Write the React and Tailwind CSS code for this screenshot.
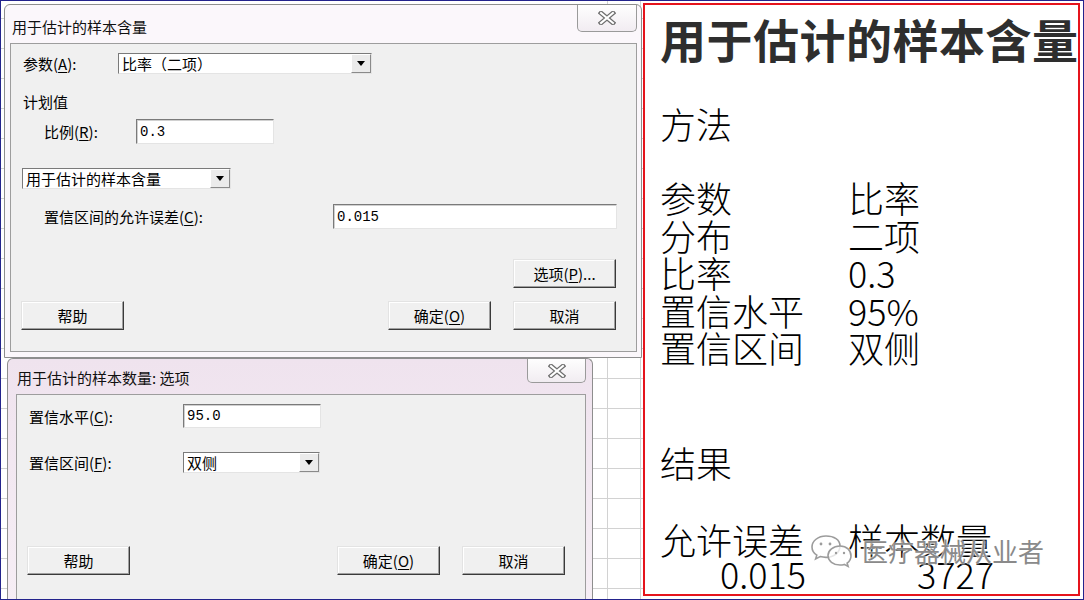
import React from 'react'

const cjk = "font-['Noto_Sans_CJK_SC','Noto_Sans',sans-serif]"

function Key({ children }) {
  return <span className="underline underline-offset-[2px] decoration-1">{children}</span>
}

function Btn({ children, className = '' }) {
  return (
    <div className={`h-[29px] flex items-center justify-center bg-[#f0f0f0] border border-t-[#e3e3e3] border-l-[#e3e3e3] border-r-[#3a3a3a] border-b-[#3a3a3a] shadow-[inset_-1px_-1px_0_#a0a0a0,inset_1px_1px_0_#ffffff] text-[15px] leading-none text-black ${className}`}>
      {children}
    </div>
  )
}

function Field({ value, className = '' }) {
  return (
    <div className={`bg-white border border-t-[#7a7a7a] border-l-[#7a7a7a] border-r-[#e4e4e4] border-b-[#e4e4e4] shadow-[inset_1px_1px_0_#d0d0d0] flex items-center pl-[3px] text-[14px] leading-none text-black font-['Liberation_Mono',monospace] ${className}`}>
      {value}
    </div>
  )
}

function Drop({ value, className = '' }) {
  return (
    <div className={`h-[21px] bg-white border border-t-[#7a7a7a] border-l-[#7a7a7a] border-r-[#e4e4e4] border-b-[#e4e4e4] flex items-center ${className}`}>
      <span className="flex-1 pl-[3px] text-[15px] leading-none text-black whitespace-nowrap">{value}</span>
      <span className="w-[20px] h-[19px] bg-[#ebebeb] border border-t-[#ffffff] border-l-[#ffffff] border-r-[#8a8a8a] border-b-[#8a8a8a] flex items-center justify-center">
        <svg width="8" height="5" viewBox="0 0 8 5">
          <path d="M0 0H8L4 5Z" fill="#000" />
        </svg>
      </span>
    </div>
  )
}

function CloseBtn({ className = '' }) {
  return (
    <div className={`rounded-b-[5px] border border-t-0 border-[#9a9a9a] bg-gradient-to-b from-[#fefefe] to-[#f1ecf1] flex items-center justify-center ${className}`}>
      <svg width="18" height="14" viewBox="0 0 18 14">
        <path d="M3 2L15 12M15 2L3 12" stroke="#6e6e6e" strokeWidth="4.5" strokeLinecap="square" />
        <path d="M3 2L15 12M15 2L3 12" stroke="#ffffff" strokeWidth="2" strokeLinecap="square" />
      </svg>
    </div>
  )
}

function WeChatIcon() {
  return (
    <svg width="44" height="34" viewBox="0 0 44 34" fill="none">
      <path d="M16 2C8 2 2 7 2 13c0 3.4 1.9 6.3 4.8 8.2L5.6 25l4.6-2.4c1.8.5 3.7.8 5.8.8 8 0 14-5 14-11.4S24 2 16 2Z" fill="#ffffff" fillOpacity="0.7" stroke="#9c9c9c" strokeWidth="1.6" />
      <path d="M30 12c-6.8 0-12 4.3-12 9.6S23.2 31 30 31c1.5 0 2.9-.2 4.2-.6l3.9 2-1-3.3c2.4-1.8 3.9-4.3 3.9-7.2C41 16.3 36.8 12 30 12Z" fill="#ffffff" fillOpacity="0.75" stroke="#9c9c9c" strokeWidth="1.6" />
      <circle cx="11" cy="10" r="1.4" fill="#9c9c9c" />
      <circle cx="20" cy="10" r="1.4" fill="#9c9c9c" />
      <circle cx="26" cy="19" r="1.2" fill="#9c9c9c" />
      <circle cx="34" cy="19" r="1.2" fill="#9c9c9c" />
    </svg>
  )
}

function SampleDialog() {
  return (
    <div className="ml-[3px] mt-[3px] w-[638px] h-[354px] shrink-0 flex flex-col border border-[#8e8e8e] rounded-t-[6px] bg-[#fbf7fb] pl-[5px] pr-[4px] pb-[5px]">
      <div className="h-[38px] shrink-0 flex items-start justify-between">
        <span className="pl-[2px] pt-[14px] text-[15px] leading-none text-[#111]">用于估计的样本含量</span>
        <CloseBtn className="w-[60px] h-[27px]" />
      </div>
      <div className="flex-1 bg-[#f0f0f0] border border-[#9d9d9d] flex flex-col text-[15px] text-black">
        {/* 参数 */}
        <div className="mt-[9px] h-[21px] pl-[12px] flex items-center">
          <span className="w-[95px] leading-none">参数(<Key>A</Key>):</span>
          <Drop value="比率（二项）" className="w-[254px]" />
        </div>

        {/* 计划值 */}
        <div className="mt-[17px] h-[20px] pl-[12px] flex items-center leading-none">计划值</div>

        <div className="mt-[8px] h-[25px] pl-[33px] flex items-center">
          <span className="w-[92px] leading-none">比例(<Key>R</Key>):</span>
          <Field value="0.3" className="w-[138px] h-[25px]" />
        </div>

        <div className="mt-[24px] pl-[11px] flex">
          <Drop value="用于估计的样本含量" className="w-[209px]" />
        </div>

        <div className="mt-[15px] h-[25px] pl-[33px] flex items-center">
          <span className="w-[289px] leading-none">置信区间的允许误差(<Key>C</Key>):</span>
          <Field value="0.015" className="w-[284px] h-[25px]" />
        </div>

        <div className="mt-[30px] pl-[502px] flex">
          <Btn className="w-[103px]">选项(<Key>P</Key>)...</Btn>
        </div>

        <div className="mt-[13px] pl-[10px] flex">
          <Btn className="w-[103px]">帮助</Btn>
          <Btn className="w-[103px] ml-[264px]">确定(<Key>O</Key>)</Btn>
          <Btn className="w-[103px] ml-[22px]">取消</Btn>
        </div>
      </div>
    </div>
  )
}

function OptionsDialog() {
  return (
    <div className="ml-[6px] w-[586px] flex-1 flex flex-col border border-b-0 border-[#8e8e8e] rounded-t-[6px] bg-gradient-to-b from-[#efe3ee] to-[#f6eef5] pl-[8px] pr-[6px]">
      <div className="h-[35px] shrink-0 flex items-start justify-between">
        <span className="pl-[1px] pt-[11px] text-[15px] leading-none text-[#111]">用于估计的样本数量: 选项</span>
        <CloseBtn className="w-[59px] h-[24px]" />
      </div>
      <div className="flex-1 bg-[#f0f0f0] border border-b-0 border-[#9d9d9d] flex flex-col text-[15px] text-black">
        <div className="mt-[9px] h-[24px] pl-[12px] flex items-center">
          <span className="w-[154px] leading-none">置信水平(<Key>C</Key>):</span>
          <Field value="95.0" className="w-[138px] h-[24px]" />
        </div>
        <div className="mt-[24px] h-[21px] pl-[12px] flex items-center">
          <span className="w-[154px] leading-none">置信区间(<Key>F</Key>):</span>
          <Drop value="双侧" className="w-[137px]" />
        </div>
        <div className="mt-[73px] pl-[10px] flex">
          <Btn className="w-[103px]">帮助</Btn>
          <Btn className="w-[103px] ml-[207px]">确定(<Key>O</Key>)</Btn>
          <Btn className="w-[103px] ml-[22px]">取消</Btn>
        </div>
      </div>
    </div>
  )
}

const methodRows = [
  ['参数', '比率'],
  ['分布', '二项'],
  ['比率', '0.3'],
  ['置信水平', '95%'],
  ['置信区间', '双侧'],
]

function ResultPanel() {
  return (
    <div className="relative mt-[2px] mb-[3px] w-[437px] flex-1 border-2 border-[#e5141c] bg-white overflow-hidden flex flex-col pl-[15px] text-black">
      <h1 className="mt-[10px] text-[46px] leading-none font-bold text-[#2e2e2e] whitespace-nowrap tracking-[0.5px]">用于估计的样本含量</h1>

      <div className="mt-[44px] text-[36px] leading-none font-light">方法</div>

      <div className="mt-[38px] grid grid-cols-[188px_1fr] text-[36px] leading-[37.5px] font-light">
        {methodRows.map(([k, v]) => (
          <React.Fragment key={k}>
            <span className="whitespace-nowrap">{k}</span>
            <span className="whitespace-nowrap">{v}</span>
          </React.Fragment>
        ))}
      </div>

      <div className="mt-[77px] text-[36px] leading-none font-light">结果</div>

      <div className="mt-[42px] grid grid-cols-[146px_146px] gap-x-[42px] text-[36px] leading-[34px] font-light">
        <span className="whitespace-nowrap">允许误差</span>
        <span className="whitespace-nowrap">样本数量</span>
        <span className="text-right">0.015</span>
        <span className="text-right">3727</span>
      </div>

      {/* watermark */}
      <div className="absolute left-[165px] top-[529px] flex items-center gap-[8px]">
        <WeChatIcon />
        <span className="text-[26px] leading-none text-[#8a8a8a] whitespace-nowrap [text-shadow:0_0_2px_#ffffff,0_0_2px_#ffffff]">医疗器械从业者</span>
      </div>
    </div>
  )
}

export default function App() {
  return (
    <div className={`w-[1084px] h-[600px] border border-[#23238c] flex overflow-hidden bg-white ${cjk}`}>
      {/* spreadsheet behind the dialogs */}
      <div className="w-[642px] shrink-0 flex flex-col bg-white bg-[linear-gradient(to_right,transparent_606px,#d2d2d2_606px,#d2d2d2_607px,transparent_607px,transparent_639px,#d2d2d2_639px,#d2d2d2_640px,transparent_640px),repeating-linear-gradient(to_bottom,transparent_0px,transparent_17px,#d2d2d2_17px,#d2d2d2_18px,transparent_18px,transparent_30px)]">
        <SampleDialog />
        <OptionsDialog />
      </div>

      <div className="flex-1 flex flex-col pr-[3px]">
        <ResultPanel />
      </div>
    </div>
  )
}
